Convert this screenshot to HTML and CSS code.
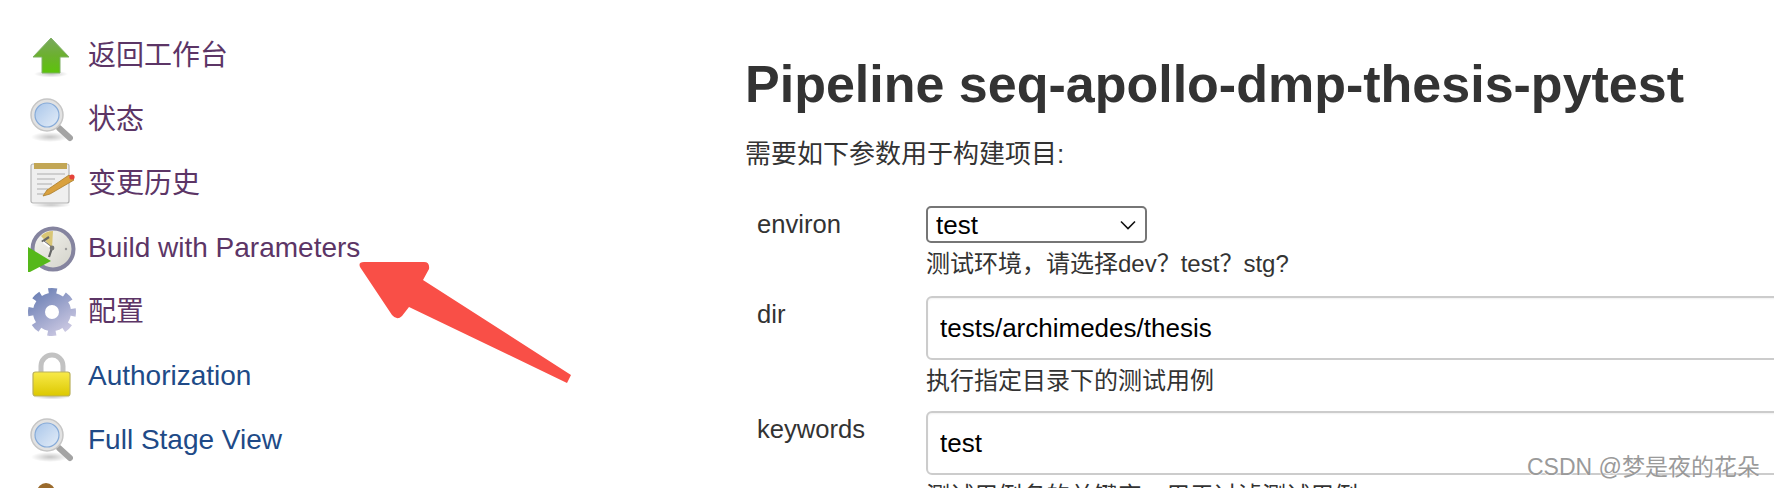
FILE: index.html
```html
<!DOCTYPE html>
<html lang="zh">
<head>
<meta charset="utf-8">
<title>Pipeline seq-apollo-dmp-thesis-pytest</title>
<link rel="stylesheet" href="styles.css">
</head>
<body>
<svg class="defs" width="0" height="0" aria-hidden="true">
  <defs>
    <linearGradient id="g-green" x1="0" y1="0" x2="0" y2="1"><stop offset="0" stop-color="#79a85e"/><stop offset=".5" stop-color="#6cb02f"/><stop offset="1" stop-color="#5cc40a"/></linearGradient>
    <linearGradient id="g-lens" x1="0" y1="0" x2="1" y2="1"><stop offset="0" stop-color="#a9c6ea"/><stop offset="1" stop-color="#e4edf8"/></linearGradient>
    <linearGradient id="g-gear" gradientUnits="userSpaceOnUse" x1="10" y1="4" x2="38" y2="46"><stop offset="0" stop-color="#6f82b6"/><stop offset="1" stop-color="#cfcbe4"/></linearGradient>
    <linearGradient id="g-lock" x1="0" y1="0" x2="0" y2="1"><stop offset="0" stop-color="#f8ea4a"/><stop offset="1" stop-color="#dcc800"/></linearGradient>
    <linearGradient id="g-face" x1="0" y1="0" x2="1" y2="1"><stop offset="0" stop-color="#f6f6f2"/><stop offset="1" stop-color="#d2d1c8"/></linearGradient>
    <radialGradient id="g-shadow"><stop offset="0" stop-color="#000" stop-opacity=".22"/><stop offset="1" stop-color="#000" stop-opacity="0"/></radialGradient>
    <symbol id="i-search" viewBox="0 0 48 48">
      <ellipse cx="22" cy="41" rx="19" ry="5" fill="url(#g-shadow)"/>
      <path d="M31 32 L42 42" stroke="#a3a3a3" stroke-width="6" stroke-linecap="round"/>
      <circle cx="19" cy="19" r="16" fill="#e2e2e2" stroke="#c6c6c6" stroke-width="1.5"/>
      <circle cx="19" cy="19" r="12" fill="url(#g-lens)" stroke="#86abd9" stroke-width="1.2"/>
    </symbol>
  </defs>
</svg>

<div class="page">
  <nav class="side">
    <a class="item visited" href="#">
      <svg class="icon" viewBox="0 0 48 48"><ellipse cx="23" cy="42" rx="17" ry="3.5" fill="url(#g-shadow)"/><path d="M23 6 L41 25 L32 25 L32 41 L14 41 L14 25 L5 25 Z" fill="url(#g-green)" stroke="#7fb064" stroke-width="1"/></svg>
      <span>返回工作台</span>
    </a>
    <a class="item visited" href="#">
      <svg class="icon"><use href="#i-search"/></svg>
      <span>状态</span>
    </a>
    <a class="item visited" href="#">
      <svg class="icon" viewBox="0 0 48 48"><ellipse cx="23" cy="45" rx="20" ry="3" fill="url(#g-shadow)"/><rect x="3" y="4" width="38" height="39" rx="2" fill="#efefef" stroke="#b4b4b4" stroke-width="1.2"/><rect x="6" y="3" width="33" height="6" fill="#c2a655"/><path d="M9 14H37M9 19H27M9 24H24M9 29H20M9 34H18" stroke="#c4c4c4" stroke-width="1.4"/><path d="M15 36 L19 30 L41 15 L46 20 L22 34 Z" fill="#d9a13f" stroke="#a97c2a" stroke-width=".8"/><circle cx="44" cy="17" r="2.6" fill="#e5433a"/></svg>
      <span>变更历史</span>
    </a>
    <a class="item visited" href="#">
      <svg class="icon" viewBox="0 0 48 48"><circle cx="25" cy="25" r="20.5" fill="url(#g-face)" stroke="#85849f" stroke-width="4"/><path d="M24 24 L13 12 A17 17 0 0 1 25 7 Z" fill="#d9c675"/><path d="M24 24 L15 17 L21 13 M24 24 L21 33" fill="none" stroke="#666" stroke-width="2.2"/><path d="M15 18 L23 24" stroke="#fff" stroke-width="2"/><circle cx="24" cy="24" r="2.4" fill="#777"/><circle cx="38" cy="25" r="1.2" fill="#999"/><path d="M0 23 L23 37 L0 49 Z" fill="#55b81a"/></svg>
      <span>Build with Parameters</span>
    </a>
    <a class="item visited" href="#">
      <svg class="icon" viewBox="0 0 48 48"><circle cx="24" cy="24" r="13" fill="none" stroke="url(#g-gear)" stroke-width="12"/><circle cx="24" cy="24" r="20" fill="none" stroke="url(#g-gear)" stroke-width="8" stroke-dasharray="8 7.7" stroke-dashoffset="4"/><circle cx="24" cy="24" r="6" fill="#fff"/></svg>
      <span>配置</span>
    </a>
    <a class="item" href="#">
      <svg class="icon" viewBox="0 0 48 48"><ellipse cx="24" cy="45" rx="19" ry="2.5" fill="url(#g-shadow)"/><path d="M13 22 V14 A11 11 0 0 1 35 14 V22" fill="none" stroke="#c2c2c2" stroke-width="5"/><rect x="5" y="20" width="37" height="24" rx="2.5" fill="url(#g-lock)" stroke="#b9b05c" stroke-width="1.2"/></svg>
      <span>Authorization</span>
    </a>
    <a class="item" href="#">
      <svg class="icon"><use href="#i-search"/></svg>
      <span>Full Stage View</span>
    </a>
    <a class="item" href="#">
      <svg class="icon" viewBox="0 0 48 48"><ellipse cx="18" cy="12" rx="9" ry="9" fill="#9a6a2c"/></svg>
    </a>
  </nav>

  <main class="main">
    <h1 class="title">Pipeline seq-apollo-dmp-thesis-pytest</h1>
    <p class="intro">需要如下参数用于构建项目:</p>
    <form class="params">
      <label class="name name-select" for="environ">environ</label>
      <div class="field">
        <select class="select" id="environ"><option>test</option><option>dev</option><option>stg</option></select>
        <div class="hint hint-first">测试环境，请选择dev？test？stg?</div>
      </div>
      <label class="name" for="dir">dir</label>
      <div class="field">
        <input class="text" id="dir" type="text" value="tests/archimedes/thesis">
        <div class="hint">执行指定目录下的测试用例</div>
      </div>
      <label class="name" for="keywords">keywords</label>
      <div class="field">
        <input class="text" id="keywords" type="text" value="test">
        <div class="hint">测试用例名的关键字，用于过滤测试用例</div>
      </div>
    </form>
  </main>
</div>

<svg class="arrow" viewBox="0 0 230 130" aria-hidden="true"><path d="M6 6 L66 6 Q72 6 71 13 L65 24 L213 119 L209 127 L51 51 L44 60 Q39 65 34 59 L2 11 Q0 6 6 6 Z" fill="#f94f47"/></svg>
<div class="mark">CSDN @梦是夜的花朵</div>
</body>
</html>
```

FILE: styles.css
```css
html, body {
  margin: 0;
  padding: 0;
  height: 100%;
  background: #fff;
  overflow: hidden;
}

body {
  font-family: "Liberation Sans", "Noto Sans CJK SC", sans-serif;
  color: #333;
  font-size: 25.6px;
}

.defs {
  position: absolute;
}

.page {
  display: flex;
  height: 488px;
  overflow: hidden;
}

.side {
  flex: 0 0 745px;
  box-sizing: border-box;
  padding: 24px 0 0 28px;
}

.item {
  display: flex;
  align-items: center;
  gap: 12px;
  height: 64px;
  font-size: 28px;
  line-height: 32px;
  color: #204a87;
  text-decoration: none;
}

.item.visited {
  color: #5c3566;
}

.icon {
  flex: none;
  width: 48px;
  height: 48px;
  filter: blur(0.5px);
}

.main {
  flex: 1;
  min-width: 0;
}

.title {
  margin: 50px 0 0;
  font-size: 52px;
  line-height: 68px;
  font-weight: 700;
  color: #333;
  white-space: nowrap;
}

.intro {
  margin: 18px 0 0;
  font-size: 26px;
  line-height: 36px;
}

.params {
  display: grid;
  grid-template-columns: 181px 900px;
  margin-top: 35px;
}

.name {
  padding-left: 12px;
  line-height: 36px;
}

.name-select {
  line-height: 34px;
}

.field {
  min-width: 0;
}

.select {
  display: block;
  box-sizing: border-box;
  width: 221px;
  height: 37px;
  margin-top: -1px;
  padding-left: 8px;
  font: 26px "Liberation Sans", sans-serif;
  color: #000;
  appearance: none;
  background: #fff url("data:image/svg+xml,%3Csvg xmlns='http://www.w3.org/2000/svg' width='16' height='10'%3E%3Cpath d='M1 1.5 L8 8.5 L15 1.5' fill='none' stroke='%23111' stroke-width='1.6'/%3E%3C/svg%3E") no-repeat right 9px center;
  border: 2px solid #767676;
  border-radius: 5px;
}

.text {
  display: block;
  box-sizing: border-box;
  width: 100%;
  height: 64px;
  padding: 0 12px;
  font: 26px "Liberation Sans", sans-serif;
  color: #000;
  background: #fff;
  border: 2px solid #ccc;
  border-radius: 6px;
  box-shadow: inset 0 1px 2px rgba(0, 0, 0, 0.06);
}

.hint {
  height: 51px;
  font-size: 24px;
  line-height: 42px;
  color: #333;
}

.hint-first {
  height: 53px;
}

.arrow {
  position: absolute;
  left: 358px;
  top: 256px;
  width: 230px;
  height: 130px;
}

.mark {
  position: absolute;
  left: 1527px;
  top: 450px;
  font-size: 23px;
  line-height: 34px;
  color: #9a9a9a;
  text-shadow: 0 1px 1px #fff;
  white-space: nowrap;
}
```
